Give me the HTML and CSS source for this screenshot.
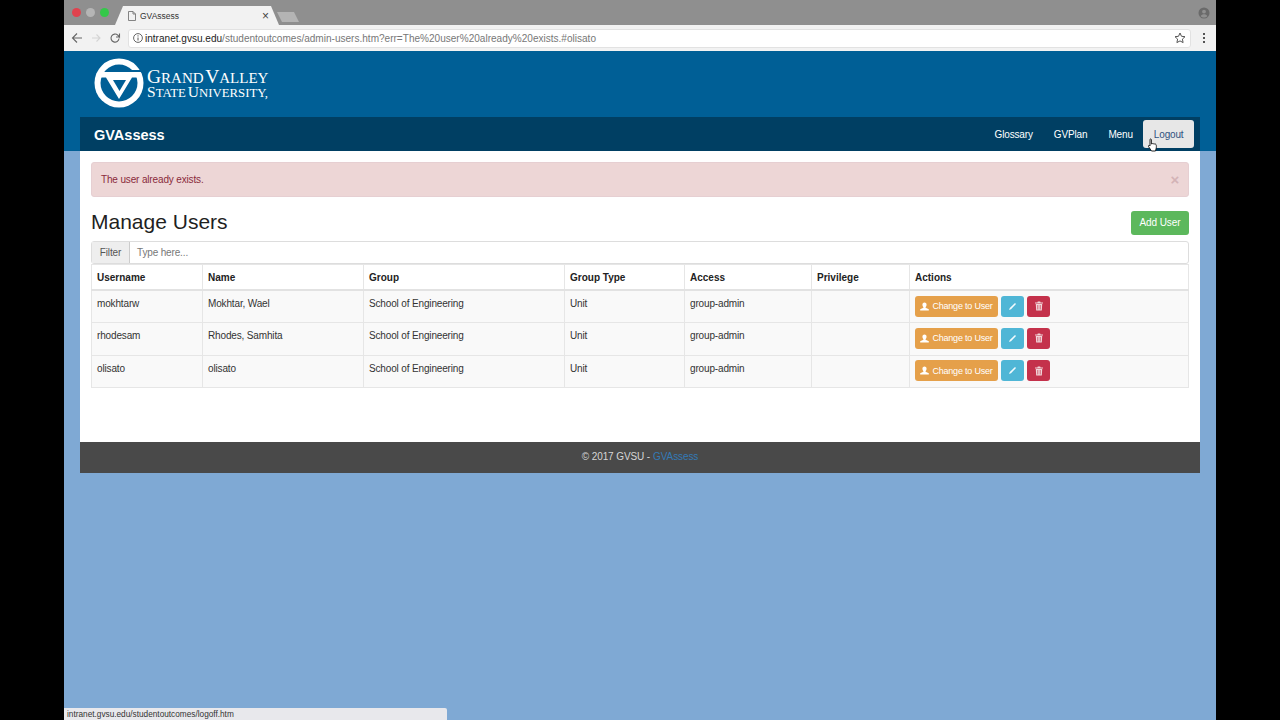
FILE: index.html
```html
<!DOCTYPE html>
<html>
<head>
    <title>GVAssess</title>
    <link rel="stylesheet" href="styles.css">
</head>
<body>
<div id="screen">
    <div id="tabStrip">
        <div class="lights">
            <span class="light lightRed"></span>
            <span class="light lightGrey"></span>
            <span class="light lightGreen"></span>
        </div>
        <div id="tab">
            <svg class="tabIcon" width="8" height="10" viewBox="0 0 8 10"><path d="M.5.500h4.500l2.500 2.500v6.500h-7z M5 .5v2.500h2.500" fill="none" stroke="#777" stroke-width=".9"/></svg>
            <span class="tabTitle">GVAssess</span>
            <span class="tabClose">×</span>
        </div>
        <div id="newTab"></div>
        <svg class="profile" width="12" height="12" viewBox="0 0 12 12"><circle cx="6" cy="6" r="5.5" fill="#6a6a6a"/><circle cx="6" cy="4.6" r="1.9" fill="#8f8f8f"/><path d="M2.600 9.200c.8-1.500 2-2 3.400-2s2.600.5 3.400 2c-.9.9-2.100 1.400-3.400 1.400s-2.500-.5-3.400-1.400z" fill="#8f8f8f"/></svg>
    </div>

    <div id="toolbar">
        <svg class="navIcon" width="12" height="12" viewBox="0 0 12 12"><path d="M11 6H2M6 1.500L1.500 6 6 10.500" fill="none" stroke="#666" stroke-width="1.100"/></svg>
        <svg class="navIcon" width="12" height="12" viewBox="0 0 12 12"><path d="M2 6h8M6.500 2.500L10 6 6.500 9.500" fill="none" stroke="#d4d4d4" stroke-width="1.100"/></svg>
        <svg class="navIcon" width="12" height="12" viewBox="0 0 12 12"><path d="M10 6.500a4 4 0 1 1-1.200-3.300L10.500 5V1.500M10.500 5H7" fill="none" stroke="#666" stroke-width="1.100"/></svg>
        <div id="omnibox">
            <svg width="10" height="10" viewBox="0 0 10 10"><circle cx="5" cy="5" r="4.400" fill="none" stroke="#555" stroke-width=".9"/><path d="M5 4.500v3M5 2.300v1.200" stroke="#555" stroke-width="1"/></svg>
            <span class="url"><span class="host">intranet.gvsu.edu</span>/studentoutcomes/admin-users.htm?err=The%20user%20already%20exists.#olisato</span>
            <svg width="12" height="12" viewBox="0 0 12 12"><path d="M6 1l1.500 3.300 3.500.4-2.600 2.400.7 3.500L6 8.900l-3.100 1.700.7-3.500L1 4.700l3.500-.4z" fill="none" stroke="#555" stroke-width="1"/></svg>
        </div>
        <div class="dots"><span></span><span></span><span></span></div>
    </div>

    <div id="page">
        <div id="brand">
            <svg class="brandMark" width="50" height="50" viewBox="1 1 50 50">
                <circle cx="26" cy="26" r="24.500" fill="#fff"/>
                <circle cx="26" cy="26" r="18.500" fill="#005f96"/>
                <path d="M6 15H46V20.500H39L26 42 13 20.500H6z" fill="#fff"/>
                <path d="M20 23H33L26.500 34z" fill="#005f96"/>
                <path d="M38 13H52V15H38z" fill="#005f96"/>
            </svg>
            <div class="wordmark">
                <div class="wordTop">G<span class="smallTop">RAND</span> V<span class="smallTop">ALLEY</span></div>
                <div class="wordBottom">S<span class="smallBottom">TATE</span> U<span class="smallBottom">NIVERSITY,</span></div>
            </div>
        </div>

        <div id="container">
            <div id="navbar">
                <a class="navTitle">GVAssess</a>
                <div class="navLinks">
                    <a class="navLink">Glossary</a>
                    <a class="navLink">GVPlan</a>
                    <a class="navLink">Menu</a>
                    <a class="navLink navHover">Logout</a>
                </div>
            </div>

            <div id="content">
                <div class="alert">
                    <span>The user already exists.</span>
                    <span class="alertClose">×</span>
                </div>

                <div class="pageHead">
                    <h1>Manage Users</h1>
                    <button class="btn btnAdd">Add User</button>
                </div>

                <div class="filter">
                    <span class="filterLabel">Filter</span>
                    <span class="filterInput">Type here...</span>
                </div>

                <table class="users">
                    <colgroup>
                        <col class="colUser"><col class="colName"><col class="colGroup"><col class="colType"><col class="colAccess"><col class="colPriv"><col>
                    </colgroup>
                    <thead>
                        <tr><th>Username</th><th>Name</th><th>Group</th><th>Group Type</th><th>Access</th><th>Privilege</th><th>Actions</th></tr>
                    </thead>
                    <tbody>
                        <tr>
                            <td>mokhtarw</td><td>Mokhtar, Wael</td><td>School of Engineering</td><td>Unit</td><td>group-admin</td><td></td>
                            <td><div class="actions">
                                <button class="btn btnChange"><svg width="9" height="9" viewBox="0 0 10 10"><path d="M5 .5c1.500 0 2.300 1.100 2.300 2.500S6.600 5.300 6.200 5.800v.7L9.800 8v1.500H.2V8l3.600-1.500v-.7C3.400 5.300 2.700 4.400 2.700 3S3.500.5 5 .5z" fill="#fff"/></svg>Change to User</button>
                                <button class="btn btnEdit"><svg width="9" height="9" viewBox="0 0 9 9"><path d="M7 1L8 2 3 7.200 1 8l.8-2z" fill="#f2fafd"/></svg></button>
                                <button class="btn btnDelete"><svg width="8" height="10" viewBox="0 0 8 10"><path d="M2.800.5h2.400l.4 1H8v1H0v-1h2.400zM.8 3h6.400l-.4 6.500H1.200zM2.500 4v4.500h.7V4zm2.300 0v4.500h.7V4z" fill="#f0d6da" fill-rule="evenodd"/></svg></button>
                            </div></td>
                        </tr>
                        <tr>
                            <td>rhodesam</td><td>Rhodes, Samhita</td><td>School of Engineering</td><td>Unit</td><td>group-admin</td><td></td>
                            <td><div class="actions">
                                <button class="btn btnChange"><svg width="9" height="9" viewBox="0 0 10 10"><path d="M5 .5c1.500 0 2.300 1.100 2.300 2.500S6.600 5.300 6.200 5.800v.7L9.800 8v1.500H.2V8l3.600-1.500v-.7C3.400 5.300 2.700 4.400 2.700 3S3.500.5 5 .5z" fill="#fff"/></svg>Change to User</button>
                                <button class="btn btnEdit"><svg width="9" height="9" viewBox="0 0 9 9"><path d="M7 1L8 2 3 7.200 1 8l.8-2z" fill="#f2fafd"/></svg></button>
                                <button class="btn btnDelete"><svg width="8" height="10" viewBox="0 0 8 10"><path d="M2.800.5h2.400l.4 1H8v1H0v-1h2.400zM.8 3h6.400l-.4 6.500H1.200zM2.500 4v4.500h.7V4zm2.300 0v4.500h.7V4z" fill="#f0d6da" fill-rule="evenodd"/></svg></button>
                            </div></td>
                        </tr>
                        <tr>
                            <td>olisato</td><td>olisato</td><td>School of Engineering</td><td>Unit</td><td>group-admin</td><td></td>
                            <td><div class="actions">
                                <button class="btn btnChange"><svg width="9" height="9" viewBox="0 0 10 10"><path d="M5 .5c1.500 0 2.300 1.100 2.300 2.500S6.600 5.300 6.200 5.800v.7L9.800 8v1.500H.2V8l3.600-1.500v-.7C3.400 5.300 2.700 4.400 2.700 3S3.500.5 5 .5z" fill="#fff"/></svg>Change to User</button>
                                <button class="btn btnEdit"><svg width="9" height="9" viewBox="0 0 9 9"><path d="M7 1L8 2 3 7.200 1 8l.8-2z" fill="#f2fafd"/></svg></button>
                                <button class="btn btnDelete"><svg width="8" height="10" viewBox="0 0 8 10"><path d="M2.800.5h2.400l.4 1H8v1H0v-1h2.400zM.8 3h6.400l-.4 6.500H1.200zM2.500 4v4.500h.7V4zm2.300 0v4.500h.7V4z" fill="#f0d6da" fill-rule="evenodd"/></svg></button>
                            </div></td>
                        </tr>
                    </tbody>
                </table>
            </div>

            <div id="footer">© 2017 GVSU - <a class="footerLink">GVAssess</a></div>
        </div>

        <div id="statusBubble">intranet.gvsu.edu/studentoutcomes/logoff.htm</div>
        <svg id="cursor" width="12" height="14" viewBox="0 0 12 14"><path d="M3 1.200c.6-.5 1.300-.2 1.400.5V6l.6-.3c.5-.3 1 0 1.300.1.500-.3 1-.1 1.300.2.500-.2 1.100 0 1.400.5.500 1 .5 3 0 4.500l-.5 2H4.500L1.500 8.500c-.4-.7.200-1.300.9-1l.6.5V1.700z" fill="#fff" stroke="#111" stroke-width=".9"/></svg>
    </div>
</div>
</body>
</html>
```
FILE: styles.css
```css
html, body {
    margin: 0;
    padding: 0;
    height: 100%;
    background-color: #000;
    overflow: hidden;
    font-family: "Liberation Sans", Arial, sans-serif;
}

#screen {
    width: 1152px;
    height: 720px;
    margin-left: 64px;
    display: flex;
    flex-direction: column;
    position: relative;
    overflow: hidden;
}

/* browser chrome */
#tabStrip {
    height: 25px;
    flex-shrink: 0;
    background-color: #8f8f8f;
    display: flex;
    align-items: flex-end;
    padding-left: 8px;
    padding-right: 6px;
}

.lights {
    display: flex;
    gap: 5px;
    align-self: flex-start;
    margin-top: 8px;
}

.light {
    width: 9px;
    height: 9px;
    border-radius: 50%;
}

.lightRed { background-color: #e0424e; }
.lightGrey { background-color: #b5b5b5; }
.lightGreen { background-color: #34c84a; }

#tab {
    width: 164px;
    height: 19px;
    margin-left: 6px;
    background-color: #f2f2f2;
    clip-path: polygon(8px 0, 156px 0, 100% 100%, 0 100%);
    display: flex;
    align-items: center;
    padding: 0 10px 0 13px;
    box-sizing: border-box;
    font-size: 8.500px;
    color: #333;
}

.tabIcon { margin-right: 4px; }
.tabTitle { flex-grow: 1; }
.tabClose { font-size: 12px; color: #444; }

#newTab {
    width: 22px;
    height: 10px;
    margin-left: -2px;
    margin-bottom: 3px;
    background-color: #b4b4b4;
    clip-path: polygon(0 0, 17px 0, 100% 100%, 5px 100%);
}

.profile {
    margin-left: auto;
    align-self: flex-start;
    margin-top: 7px;
}

#toolbar {
    height: 26px;
    flex-shrink: 0;
    background-color: #f2f2f2;
    display: flex;
    align-items: center;
    padding-left: 7px;
    padding-right: 11px;
    gap: 7px;
    box-sizing: border-box;
}

.navIcon { flex-shrink: 0; }

#omnibox {
    flex-grow: 1;
    height: 19px;
    background-color: #fff;
    border-radius: 3px;
    border: 1px solid #e2e2e2;
    display: flex;
    align-items: center;
    padding: 0 4px;
    box-sizing: border-box;
    font-size: 10.050px;
    color: #777;
}

.url { margin-left: 2px; flex-grow: 1; }
.host { color: #222; }

.dots {
    display: flex;
    flex-direction: column;
    gap: 2px;
    margin-left: 5px;
}

.dots span {
    width: 2px;
    height: 2px;
    background-color: #555;
}

/* page */
#page {
    flex-grow: 1;
    background: linear-gradient(#005f96 0, #005f96 100px, #7fa9d4 100px);
    position: relative;
    padding: 0 16px;
}

#brand {
    height: 66px;
    box-sizing: border-box;
    padding: 0 0 2px 14px;
    display: flex;
    align-items: center;
}

.wordmark {
    font-family: "Liberation Serif", serif;
    color: #fff;
    margin-left: 3px;
    margin-top: 4px;
    line-height: 14px;
    white-space: nowrap;
}

.wordTop { font-size: 19.500px; word-spacing: -3px; }
.smallTop { font-size: 15px; }
.wordBottom { font-size: 15.500px; word-spacing: -2px; }
.smallBottom { font-size: 12.800px; }

#container {
    background-color: #fff;
}

#navbar {
    height: 34px;
    background-color: #003f63;
    display: flex;
    align-items: center;
    justify-content: space-between;
    padding: 0 6px 0 14px;
}

.navTitle {
    color: #fff;
    font-size: 14.500px;
    font-weight: bold;
    padding-top: 1px;
}

.navLinks {
    display: flex;
    align-items: center;
}

.navLink {
    color: #fff;
    font-size: 10px;
    letter-spacing: -0.15px;
    height: 28px;
    line-height: 29px;
    padding: 0 10.500px;
    border-radius: 3px;
}

.navHover {
    background-color: #e7e7e7;
    color: #31527f;
}

#content {
    padding: 11px 11px 54px;
}

.alert {
    height: 35px;
    box-sizing: border-box;
    background-color: #edd6d6;
    border: 1px solid #e6cfd2;
    border-radius: 3px;
    color: #8a2a3b;
    font-size: 10px;
    letter-spacing: -0.15px;
    display: flex;
    align-items: center;
    justify-content: space-between;
    padding: 0 9px;
}

.alertClose {
    font-size: 15px;
    font-weight: bold;
    color: #d3b3b6;
}

.pageHead {
    display: flex;
    align-items: center;
    justify-content: space-between;
    margin-top: 13px;
    height: 25px;
}

h1 {
    margin: 0 0 1px;
    font-size: 21px;
    font-weight: normal;
    color: #1f1f1f;
}

.btn {
    border: 0;
    border-radius: 3px;
    color: #fff;
    font-family: inherit;
    padding: 0;
}

.btnAdd {
    width: 58px;
    height: 24px;
    background-color: #5cb85c;
    font-size: 10px;
    letter-spacing: -0.1px;
}

.filter {
    margin-top: 6px;
    height: 23px;
    display: flex;
    box-sizing: border-box;
    border: 1px solid #ddd;
    border-radius: 3px;
    font-size: 10px;
    letter-spacing: -0.15px;
}

.filterLabel {
    width: 38px;
    box-sizing: border-box;
    background-color: #eee;
    border-right: 1px solid #ccc;
    color: #555;
    text-align: center;
    line-height: 21px;
}

.filterInput {
    padding-left: 7px;
    color: #777;
    line-height: 21px;
}

.users {
    width: 1098px;
    table-layout: fixed;
    border-collapse: collapse;
    font-size: 10px;
    letter-spacing: -0.15px;
    color: #333;
}

.colUser { width: 111px; }
.colName { width: 161px; }
.colGroup { width: 201px; }
.colType { width: 120px; }
.colAccess { width: 127px; }
.colPriv { width: 98px; }

.users th, .users td {
    border: 1px solid #e6e6e6;
    padding: 0 5px;
    text-align: left;
}

.users th {
    height: 24px;
    color: #222;
    letter-spacing: 0;
    border-bottom: 2px solid #e2e2e2;
}

.users td {
    height: 32.500px;
    padding-bottom: 6px;
    box-sizing: border-box;
    background-color: #f9f9f9;
    vertical-align: middle;
}

.users td:last-child { padding-bottom: 1px; }

.actions {
    display: flex;
    gap: 3px;
}

.btnChange {
    width: 83px;
    height: 21px;
    background-color: #e5a04a;
    font-size: 9px;
    letter-spacing: -0.2px;
    display: flex;
    align-items: center;
    justify-content: center;
    gap: 3px;
}

.btnEdit, .btnDelete {
    width: 23px;
    height: 21px;
    display: flex;
    align-items: center;
    justify-content: center;
}

.btnEdit { background-color: #4fb6d6; }
.btnDelete { background-color: #c4314b; }

#footer {
    height: 31px;
    box-sizing: border-box;
    padding-bottom: 3px;
    background-color: #494949;
    color: #d6d6d6;
    font-size: 10px;
    letter-spacing: -0.1px;
    display: flex;
    align-items: center;
    justify-content: center;
    gap: 3px;
}

.footerLink { color: #337ab7; }

#statusBubble {
    position: absolute;
    left: 0;
    bottom: 0;
    width: 380px;
    height: 12px;
    background-color: #e8e8ec;
    border-top-right-radius: 2px;
    font-size: 8.250px;
    line-height: 13px;
    padding-left: 3px;
    color: #333;
}

#cursor {
    position: absolute;
    left: 1083px;
    top: 87px;
}
```
